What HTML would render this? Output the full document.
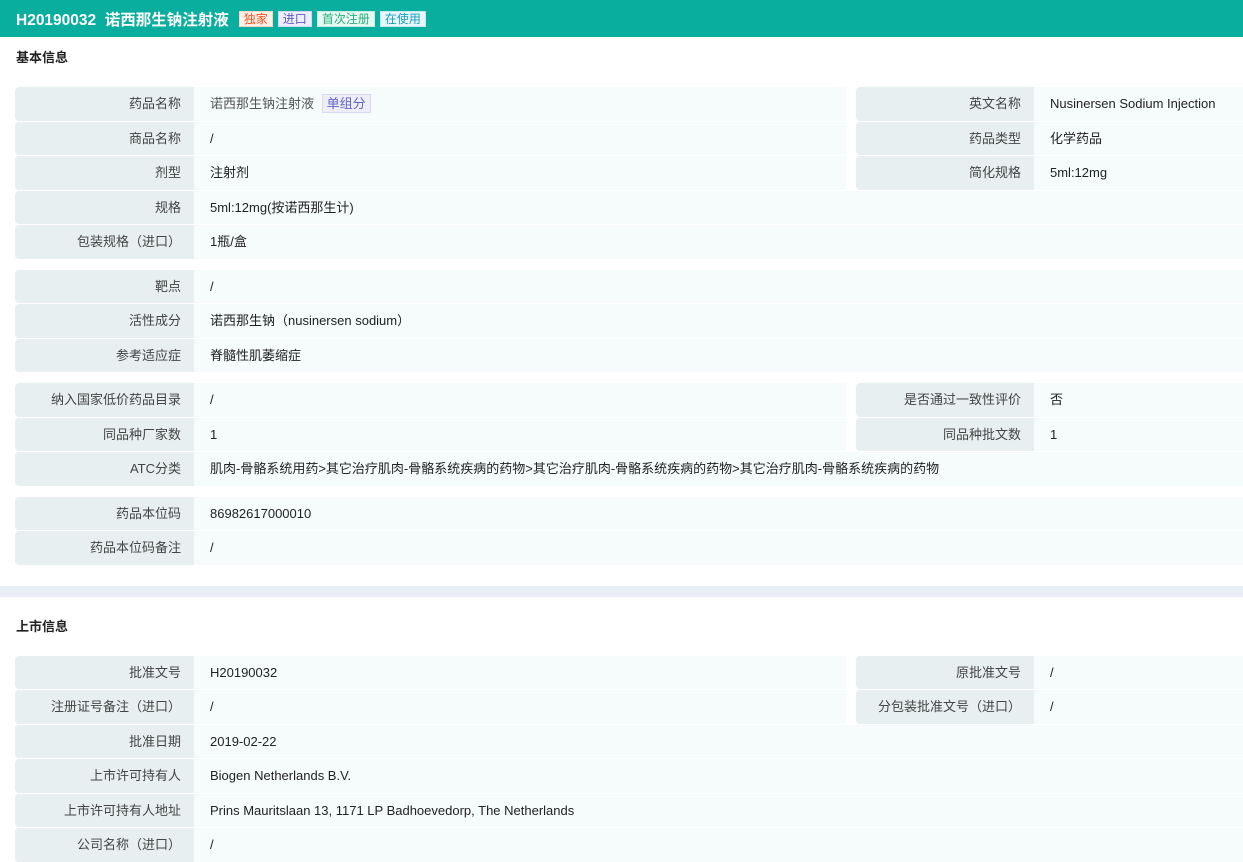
<!DOCTYPE html>
<html><head><meta charset="utf-8"><style>
*{margin:0;padding:0;box-sizing:border-box}
body{width:1243px;height:860px;overflow:hidden;background:#fff;font-family:"Liberation Sans","Noto Sans CJK SC",sans-serif;font-size:13px;color:#222}
.hd{height:37px;background:#0aae9f;color:#fff;display:flex;align-items:center;padding-left:16px;font-weight:bold;font-size:15.5px}
.tag{font-weight:normal;font-size:12px;height:16px;line-height:14px;padding:0 4px;margin-left:5px;border:1px solid}
.title{font-weight:bold;font-size:13px;padding-left:16px;height:16px;line-height:16px}
.grp{margin-left:15px;width:1228px}
.row{display:flex;height:33.5px;margin-bottom:1px}
.l{background:#e7eff0;color:#444;text-align:right;padding-right:13px;line-height:33.5px;width:179px;border-radius:4px 0 0 4px}
.v{background:#f6fbfb;line-height:33.5px;padding-left:16px;flex:1;color:#222}
.half{width:652px;flex:none;margin-right:10px}
.l2{width:178px}
.gap{height:10px}
</style></head><body>
<div class="hd">H20190032&nbsp;&nbsp;诺西那生钠注射液<span class="tag" style="margin-left:10px;background:#fff1ea;color:#f5541c;border-color:#fbd4c2">独家</span><span class="tag" style="background:#eeeefb;color:#5b5bc4;border-color:#d6d6f2">进口</span><span class="tag" style="background:#e8f8f3;color:#26b07a;border-color:#c6ece0">首次注册</span><span class="tag" style="background:#e6f6fb;color:#1a9fc1;border-color:#c3e8f2">在使用</span></div>
<div style="height:13px"></div>
<div class="title">基本信息</div>
<div style="height:21px"></div>
<div class="grp">
<div class="row"><div class="l">药品名称</div><div class="v half" style="color:#555">诺西那生钠注射液 <span style="background:#eeeefb;color:#6464c4;border:1px solid #d8d8f0;padding:1px 4px;margin-left:4px">单组分</span></div><div class="l l2">英文名称</div><div class="v">Nusinersen Sodium Injection</div></div>
<div class="row"><div class="l">商品名称</div><div class="v half">/</div><div class="l l2">药品类型</div><div class="v">化学药品</div></div>
<div class="row"><div class="l">剂型</div><div class="v half">注射剂</div><div class="l l2">简化规格</div><div class="v">5ml:12mg</div></div>
<div class="row"><div class="l">规格</div><div class="v">5ml:12mg(按诺西那生计)</div></div>
<div class="row"><div class="l">包装规格（进口）</div><div class="v">1瓶/盒</div></div>
</div>
<div class="gap"></div>
<div class="grp">
<div class="row"><div class="l">靶点</div><div class="v">/</div></div>
<div class="row"><div class="l">活性成分</div><div class="v">诺西那生钠（nusinersen sodium）</div></div>
<div class="row"><div class="l">参考适应症</div><div class="v">脊髓性肌萎缩症</div></div>
</div>
<div class="gap"></div>
<div class="grp">
<div class="row"><div class="l">纳入国家低价药品目录</div><div class="v half">/</div><div class="l l2">是否通过一致性评价</div><div class="v">否</div></div>
<div class="row"><div class="l">同品种厂家数</div><div class="v half">1</div><div class="l l2">同品种批文数</div><div class="v">1</div></div>
<div class="row"><div class="l">ATC分类</div><div class="v">肌肉-骨骼系统用药&gt;其它治疗肌肉-骨骼系统疾病的药物&gt;其它治疗肌肉-骨骼系统疾病的药物&gt;其它治疗肌肉-骨骼系统疾病的药物</div></div>
</div>
<div class="gap"></div>
<div class="grp">
<div class="row"><div class="l">药品本位码</div><div class="v">86982617000010</div></div>
<div class="row"><div class="l">药品本位码备注</div><div class="v">/</div></div>
</div>
<div style="height:20px"></div>
<div style="height:11px;background:#e9eef5"></div>
<div style="height:22px"></div>
<div class="title">上市信息</div>
<div style="height:21px"></div>
<div class="grp">
<div class="row"><div class="l">批准文号</div><div class="v half">H20190032</div><div class="l l2">原批准文号</div><div class="v">/</div></div>
<div class="row"><div class="l">注册证号备注（进口）</div><div class="v half">/</div><div class="l l2">分包装批准文号（进口）</div><div class="v">/</div></div>
<div class="row"><div class="l">批准日期</div><div class="v">2019-02-22</div></div>
<div class="row"><div class="l">上市许可持有人</div><div class="v">Biogen Netherlands B.V.</div></div>
<div class="row"><div class="l">上市许可持有人地址</div><div class="v">Prins Mauritslaan 13, 1171 LP Badhoevedorp, The Netherlands</div></div>
<div class="row"><div class="l">公司名称（进口）</div><div class="v">/</div></div>
</div>
</body></html>
